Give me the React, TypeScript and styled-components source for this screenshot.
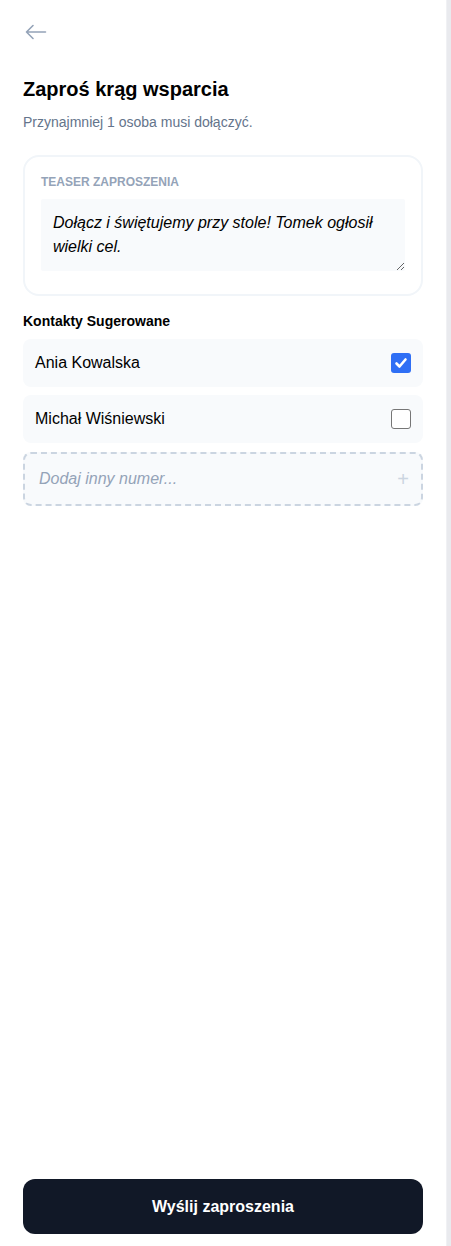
import React, { useState } from 'react';
import styled, { createGlobalStyle } from 'styled-components';

const GlobalStyle = createGlobalStyle`
    html, body {
        margin: 0;
        padding: 0;
        background: #ffffff;
        font-family: "Liberation Sans", Arial, sans-serif;
    }
    * { box-sizing: border-box; }
`;

const Shell = styled.div`
    display: flex;
    height: 100vh;
`;

const Screen = styled.main`
    flex: 1;
    display: flex;
    flex-direction: column;
    padding: 20px 23px 12px 23px;
    background: #ffffff;
`;

const Rail = styled.div`
    flex-shrink: 0;
    width: 5px;
    background: #e9eaee;
    border-left: 1px solid #f0f1f4;
`;

const BackButton = styled.button`
    align-self: flex-start;
    display: flex;
    padding: 4px 2px;
    border: 0;
    background: none;
    color: #94a3b8;
    cursor: pointer;
`;

const Title = styled.h1`
    margin: 34px 0 0;
    font-size: 20px;
    font-weight: 700;
    color: #000;
`;

const Subtitle = styled.p`
    margin: 13px 0 0;
    font-size: 14px;
    color: #64748b;
`;

const TeaserCard = styled.section`
    margin-top: 25px;
    padding: 18px 16px 23px;
    border: 2px solid #f1f5f9;
    border-radius: 16px;
    display: flex;
    flex-direction: column;
    gap: 10px;
`;

const CardLabel = styled.label`
    font-size: 12px;
    font-weight: 700;
    text-transform: uppercase;
    color: #94a3b8;
`;

const TeaserText = styled.textarea`
    width: 100%;
    height: 72px;
    padding: 12px 12px;
    border: 0;
    border-radius: 2px;
    background: #f8fafc;
    font-family: "Liberation Sans", Arial, sans-serif;
    font-size: 16px;
    font-style: italic;
    line-height: 24px;
    color: #000;
    outline: none;
    resize: vertical;
`;

const SectionTitle = styled.h2`
    margin: 17px 0 10px;
    font-size: 14px;
    font-weight: 700;
    color: #000;
`;

const ContactList = styled.div`
    display: flex;
    flex-direction: column;
    gap: 8px;
`;

const ContactRow = styled.label`
    display: flex;
    align-items: center;
    justify-content: space-between;
    height: 48px;
    padding: 0 12px;
    border-radius: 8px;
    background: #f8fafc;
    font-size: 16px;
    color: #000;
    cursor: pointer;
`;

const Box = styled.span<{ $checked: boolean }>`
    width: 20px;
    height: 20px;
    border-radius: 3px;
    display: grid;
    place-items: center;
    background: ${p => (p.$checked ? '#2f6ff5' : '#ffffff')};
    border: ${p => (p.$checked ? '0' : '1.5px solid #767676')};
`;

const HiddenInput = styled.input`
    display: none;
`;

const AddRow = styled.div`
    margin-top: 1px;
    display: flex;
    align-items: center;
    justify-content: space-between;
    height: 54px;
    padding: 0 12px 0 14px;
    border: 2px dashed #cbd5e1;
    border-radius: 8px;
    background: #f8fafc;
    color: #94a3b8;
    font-size: 16px;
    font-style: italic;
`;

const Plus = styled.span`
    font-style: normal;
    font-size: 20px;
    color: #cbd5e1;
`;

const SubmitButton = styled.button`
    margin-top: auto;
    height: 55px;
    border: 0;
    border-radius: 12px;
    background: #111827;
    color: #ffffff;
    font-family: "Liberation Sans", Arial, sans-serif;
    font-size: 16px;
    font-weight: 700;
    cursor: pointer;
`;

const contacts = [
    { name: 'Ania Kowalska', checked: true },
    { name: 'Michał Wiśniewski', checked: false },
];

export default function App() {
    const [picked, setPicked] = useState(contacts.map(c => c.checked));

    return (
        <>
            <GlobalStyle />
            <Shell>
                <Screen>
                    <BackButton aria-label="Wstecz">
                        <svg width="22" height="16" viewBox="0 0 22 16" fill="none" stroke="currentColor" strokeWidth="1.6" strokeLinecap="round" strokeLinejoin="round">
                            <path d="M8 1.5 1.5 8 8 14.5M1.5 8H20.5" />
                        </svg>
                    </BackButton>
                    <Title>Zaproś krąg wsparcia</Title>
                    <Subtitle>Przynajmniej 1 osoba musi dołączyć.</Subtitle>

                    <TeaserCard>
                        <CardLabel>Teaser zaproszenia</CardLabel>
                        <TeaserText defaultValue="Dołącz i świętujemy przy stole! Tomek ogłosił wielki cel." />
                    </TeaserCard>

                    <SectionTitle>Kontakty Sugerowane</SectionTitle>
                    <ContactList>
                        {contacts.map((c, i) => (
                            <ContactRow key={c.name}>
                                {c.name}
                                <HiddenInput
                                    type="checkbox"
                                    checked={picked[i]}
                                    onChange={() => setPicked(prev => prev.map((v, j) => (j === i ? !v : v)))}
                                />
                                <Box $checked={picked[i]}>
                                    {picked[i] && (
                                        <svg width="14" height="14" viewBox="0 0 14 14" fill="none" stroke="#fff" strokeWidth="2.6" strokeLinecap="round" strokeLinejoin="round">
                                            <path d="M2.5 7.5 5.5 10.5 11.5 3.5" />
                                        </svg>
                                    )}
                                </Box>
                            </ContactRow>
                        ))}
                        <AddRow>
                            Dodaj inny numer...
                            <Plus>+</Plus>
                        </AddRow>
                    </ContactList>

                    <SubmitButton>Wyślij zaproszenia</SubmitButton>
                </Screen>
                <Rail />
            </Shell>
        </>
    );
}
